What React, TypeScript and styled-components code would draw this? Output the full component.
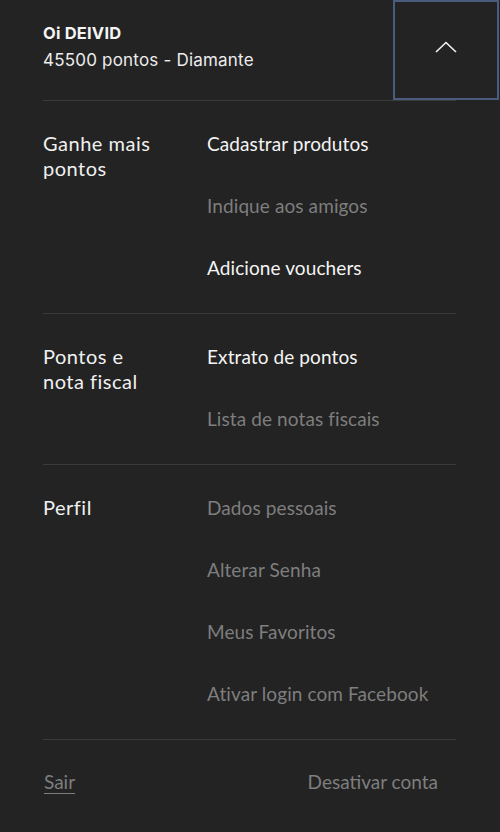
import styled, { createGlobalStyle } from 'styled-components';

const GlobalStyle = createGlobalStyle`
    html, body {
        margin: 0;
        padding: 0;
        background: #232323;
    }
`;

const Panel = styled.div`
    width: 500px;
    min-height: 832px;
    background: #232323;
    color: #f2f2f2;
    font-family: Lato, "Open Sans", sans-serif;
    box-sizing: border-box;
`;

const Header = styled.header`
    display: flex;
    align-items: stretch;
    height: 100px;
`;

const Greeting = styled.div`
    flex: 1;
    display: flex;
    flex-direction: column;
    justify-content: center;
    padding: 0 0 6px 43px;
    font-family: Inter, "Noto Sans", sans-serif;
`;

const Hello = styled.span`
    font-size: 16.5px;
    font-weight: 700;
    line-height: 25px;
    margin-bottom: 2px;
    color: #f4f4f4;
    letter-spacing: 0.2px;
`;

const Points = styled.span`
    font-size: 17px;
    line-height: 25px;
    color: #ececec;
    letter-spacing: 0.2px;
`;

const ToggleButton = styled.button`
    width: 106px;
    margin-right: 1px;
    background: #232323;
    border: 2px solid #4b5b7e;
    display: flex;
    align-items: center;
    justify-content: center;
    padding: 0 0 6px 0;
    cursor: pointer;
`;

const Content = styled.div`
    padding: 0 44px 0 43px;
`;

const Divider = styled.hr`
    border: none;
    border-top: 1px solid #3a3a3a;
    margin: 0;
`;

const Section = styled.section`
    display: grid;
    grid-template-columns: 164px 1fr;
    padding: 11px 0 15px;
`;

const SectionTitle = styled.h3`
    margin: 0;
    padding-top: 19px;
    width: 122px;
    font-size: 20px;
    font-weight: 400;
    line-height: 25px;
    color: #f0f0f0;
    letter-spacing: 0.5px;
`;

const Links = styled.ul`
    list-style: none;
    margin: 0;
    padding: 0;
`;

const LinkItem = styled.li<{ $active?: boolean }>`
    height: 62px;
    display: flex;
    align-items: center;
    font-size: 19px;
    letter-spacing: 0.1px;
    color: ${(p) => (p.$active ? '#f4f4f4' : '#7e7e7e')};
`;

const Footer = styled.footer`
    display: flex;
    justify-content: space-between;
    align-items: center;
    padding: 30px 18px 0 1px;
    font-size: 19px;
`;

const FooterLink = styled.a<{ $underline?: boolean }>`
    color: #7e7e7e;
    text-decoration: ${(p) => (p.$underline ? 'underline' : 'none')};
    text-underline-offset: 4px;
    text-decoration-thickness: 1px;
`;

interface MenuSection {
    title: string;
    links: { label: string; active?: boolean }[];
}

const sections: MenuSection[] = [
    {
        title: 'Ganhe mais pontos',
        links: [
            { label: 'Cadastrar produtos', active: true },
            { label: 'Indique aos amigos' },
            { label: 'Adicione vouchers', active: true },
        ],
    },
    {
        title: 'Pontos e nota fiscal',
        links: [
            { label: 'Extrato de pontos', active: true },
            { label: 'Lista de notas fiscais' },
        ],
    },
    {
        title: 'Perfil',
        links: [
            { label: 'Dados pessoais' },
            { label: 'Alterar Senha' },
            { label: 'Meus Favoritos' },
            { label: 'Ativar login com Facebook' },
        ],
    },
];

export default function App() {
    return (
        <>
            <GlobalStyle />
            <Panel>
                <Header>
                    <Greeting>
                        <Hello>Oi DEIVID</Hello>
                        <Points>45500 pontos - Diamante</Points>
                    </Greeting>
                    <ToggleButton aria-label="Fechar menu">
                        <svg width="22" height="12" viewBox="0 0 22 12" fill="none">
                            <path d="M1 11 L11 1.5 L21 11" stroke="#f2f2f2" strokeWidth="1.6" />
                        </svg>
                    </ToggleButton>
                </Header>
                <Content>
                    {sections.map((section) => (
                        <div key={section.title}>
                            <Divider />
                            <Section>
                                <SectionTitle>{section.title}</SectionTitle>
                                <Links>
                                    {section.links.map((link) => (
                                        <LinkItem key={link.label} $active={link.active}>
                                            {link.label}
                                        </LinkItem>
                                    ))}
                                </Links>
                            </Section>
                        </div>
                    ))}
                    <Divider />
                    <Footer>
                        <FooterLink $underline>Sair</FooterLink>
                        <FooterLink>Desativar conta</FooterLink>
                    </Footer>
                </Content>
            </Panel>
        </>
    );
}
